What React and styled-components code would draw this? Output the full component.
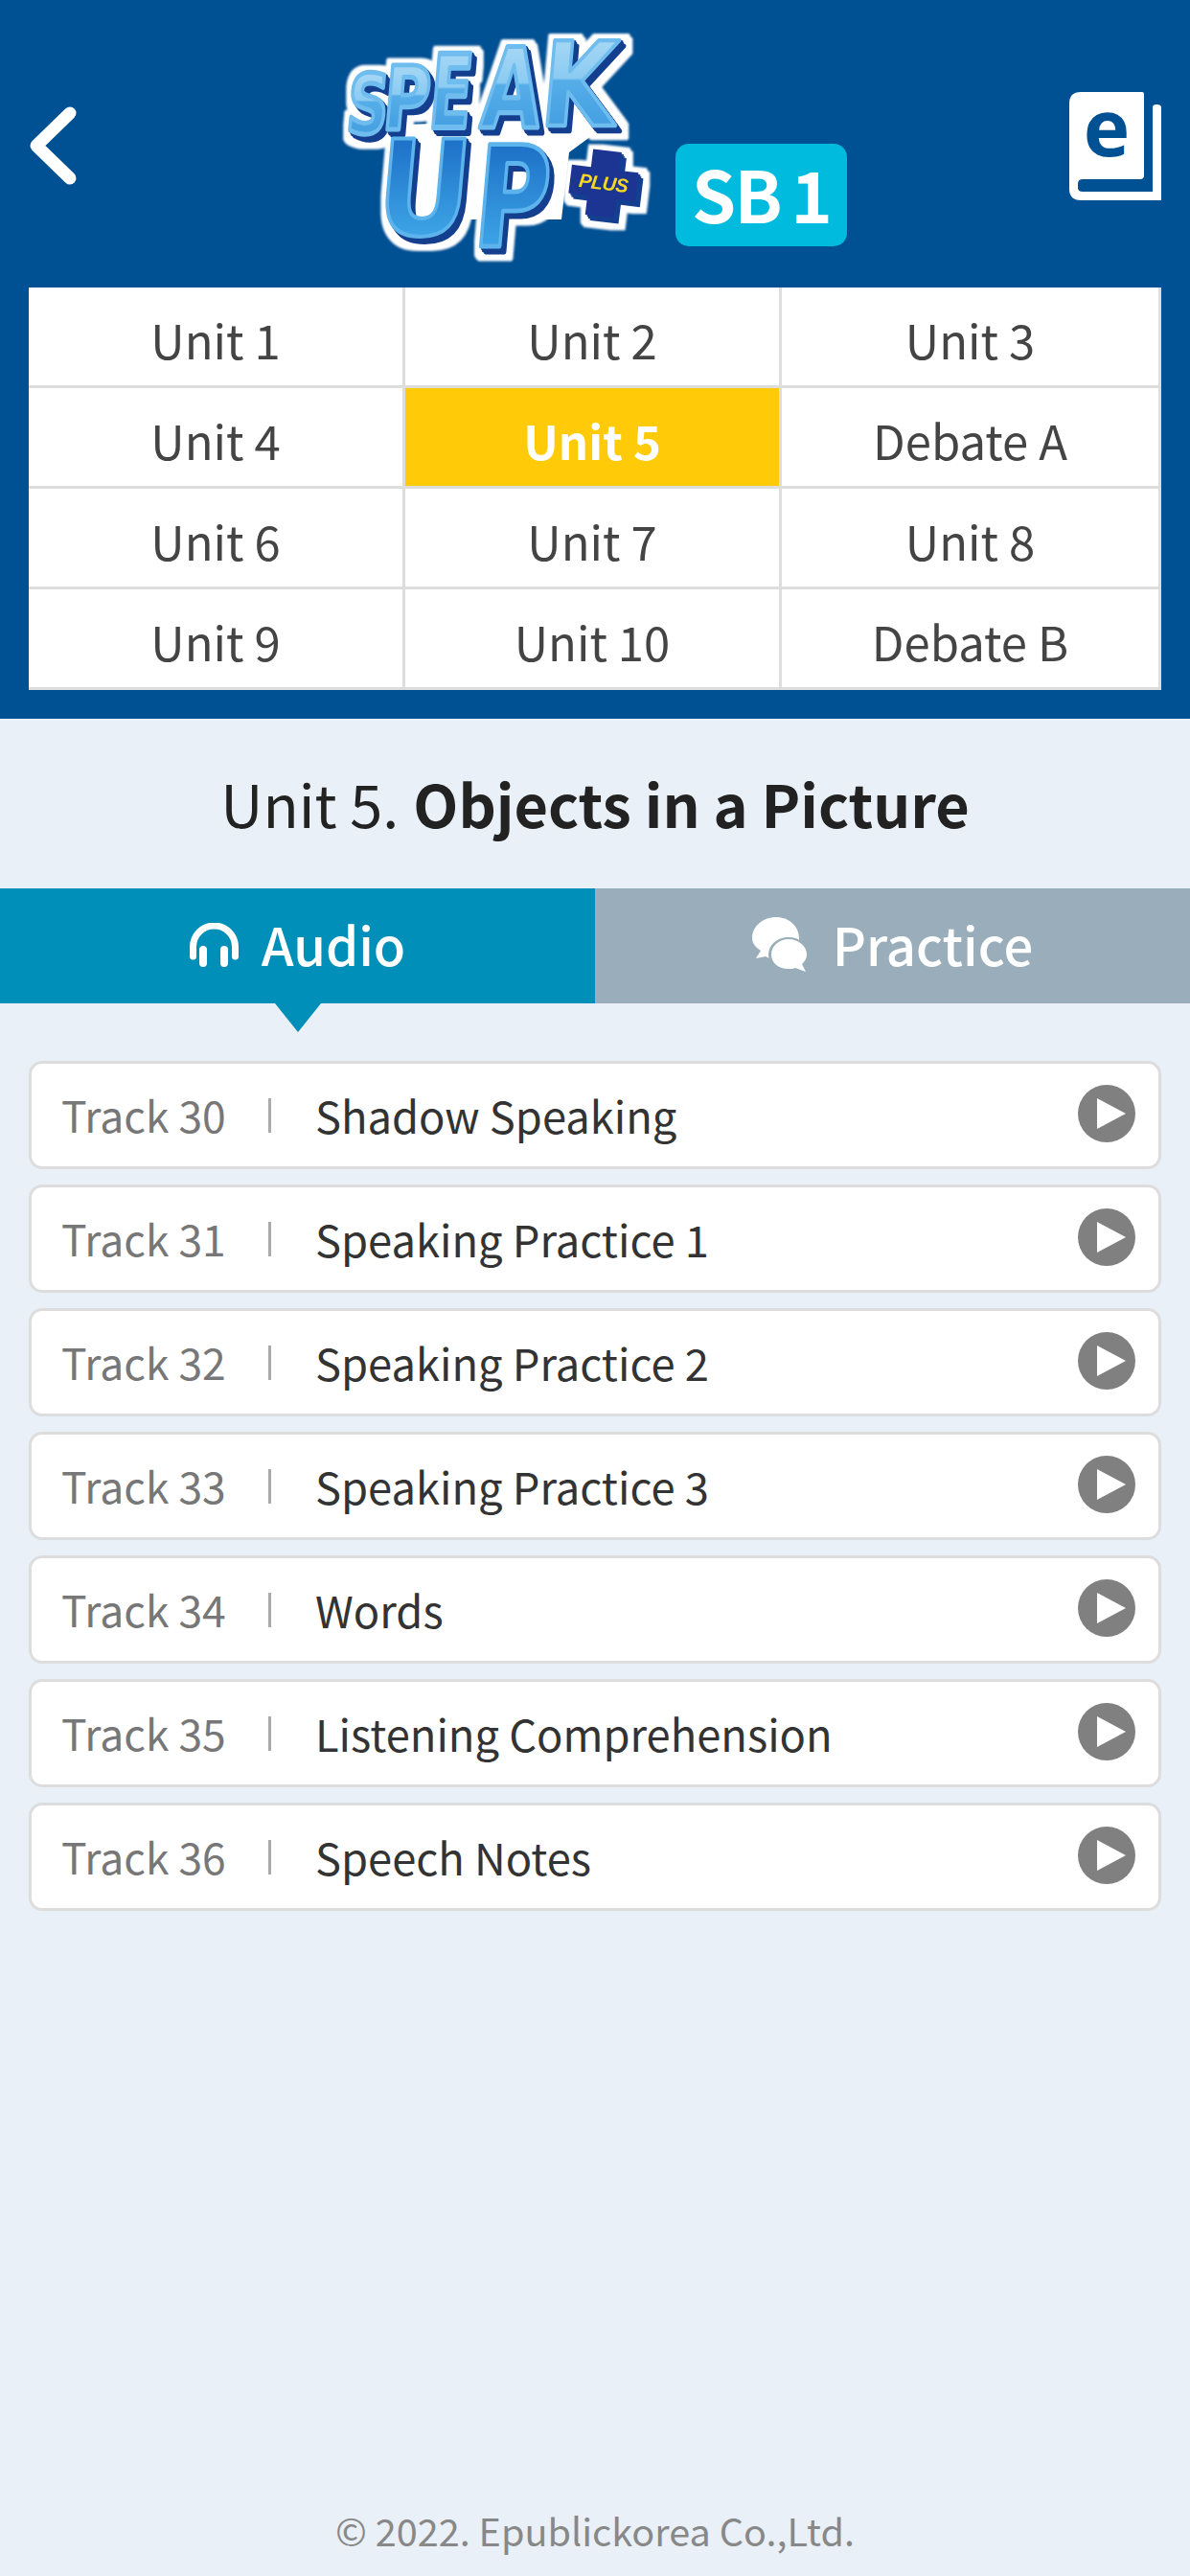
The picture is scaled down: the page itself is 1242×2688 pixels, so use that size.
import React from "react";
import styled, { createGlobalStyle } from "styled-components";

const GlobalStyle = createGlobalStyle`
  html, body {
    margin: 0;
    padding: 0;
    background: #e9f0f7;
  }
  * {
    box-sizing: border-box;
  }
  body {
    font-family: "Noto Sans CJK KR", "Noto Sans", sans-serif;
  }
`;

const Page = styled.div`
  width: 1242px;
  min-height: 2688px;
  display: flex;
  flex-direction: column;
  background: #e9f0f7;
`;

const Header = styled.header`
  height: 750px;
  background: #005094;
  padding: 0 30px;
`;

const TopBar = styled.div`
  height: 300px;
  display: grid;
  grid-template-columns: 96px 1fr 96px;
`;

const BackIcon = styled.svg`
  display: block;
  width: 50px;
  height: 82px;
  margin-top: 111px;
`;

const BookIcon = styled.svg`
  display: block;
  width: 96px;
  height: 113px;
  margin-top: 96px;
`;

const Brand = styled.div`
  display: flex;
  justify-content: center;
  align-items: flex-start;
  gap: 27px;
`;

const LogoArt = styled.svg`
  display: block;
  width: 320px;
  height: 240px;
  margin-top: 33px;
  overflow: visible;
`;

const Badge = styled.div`
  width: 179px;
  height: 107px;
  margin-top: 150px;
  padding-bottom: 5px;
  border-radius: 14px;
  background: #00bbdd;
  color: #fff;
  font-size: 74px;
  font-weight: 700;
  line-height: 102px;
  text-align: center;
  letter-spacing: -2px;
  word-spacing: -4px;
`;

const UnitGrid = styled.div`
  display: grid;
  grid-template-columns: 393px 393px 396px;
  background: #fff;
`;

const UnitCell = styled.div`
  height: 105px;
  padding-top: 4px;
  display: flex;
  align-items: center;
  justify-content: center;
  border-bottom: 3px solid #ddd;
  border-right: 3px solid #ddd;
  background: ${(p) => (p.$active ? "#ffca08" : "#fff")};
  color: ${(p) => (p.$active ? "#fff" : "#444")};
  font-size: 49px;
  font-weight: ${(p) => (p.$active ? 700 : 400)};
`;

const Title = styled.h1`
  height: 177px;
  margin: 0;
  padding-bottom: 3px;
  display: flex;
  align-items: center;
  justify-content: center;
  gap: 15px;
  color: #222;
  font-size: 61.2px;
  font-weight: 400;
  b {
    font-weight: 700;
  }
`;

const Tabs = styled.div`
  display: grid;
  grid-template-columns: 621px 621px;
  height: 120px;
`;

const Tab = styled.div`
  position: relative;
  display: flex;
  align-items: center;
  justify-content: center;
  gap: ${(p) => p.$gap}px;
  background: ${(p) => (p.$active ? "#008fb9" : "#99aeba")};
  color: #fff;
  font-size: 54.4px;
  font-weight: 500;
  ${(p) =>
    p.$active &&
    `
    &::after {
      content: "";
      position: absolute;
      left: 287px;
      top: 100%;
      border-left: 24px solid transparent;
      border-right: 24px solid transparent;
      border-top: 30px solid #008fb9;
    }
  `}
`;

const TabLabel = styled.span`
  margin-top: -5px;
`;

const TabIcon = styled.svg`
  display: block;
  flex: none;
  margin-top: -3px;
`;

const TrackList = styled.ul`
  list-style: none;
  margin: 0;
  padding: 60px 30px 0;
  display: flex;
  flex-direction: column;
  gap: 16px;
`;

const TrackRow = styled.li`
  height: 113px;
  display: flex;
  align-items: center;
  padding: 0 24px 0 31px;
  background: #fff;
  border: 3px solid #ddd;
  border-radius: 14px;
`;

const TrackNo = styled.span`
  width: 216px;
  margin-top: -2px;
  color: #777;
  font-size: 44.4px;
`;

const Divider = styled.i`
  display: block;
  width: 3px;
  height: 36px;
  background: #aaa;
  margin-top: 1px;
`;

const TrackName = styled.span`
  margin-left: 46px;
  margin-top: -2px;
  flex: 1;
  color: #333;
  font-size: 45.3px;
`;

const PlayIcon = styled.svg`
  display: block;
  width: 60px;
  height: 60px;
  margin-top: -4px;
`;

const Footer = styled.footer`
  margin-top: auto;
  padding-bottom: 20px;
  text-align: center;
  color: #888;
  font-size: 39.6px;
`;

const units = [
  "Unit 1", "Unit 2", "Unit 3",
  "Unit 4", "Unit 5", "Debate A",
  "Unit 6", "Unit 7", "Unit 8",
  "Unit 9", "Unit 10", "Debate B",
];

const tracks = [
  ["Track 30", "Shadow Speaking"],
  ["Track 31", "Speaking Practice 1"],
  ["Track 32", "Speaking Practice 2"],
  ["Track 33", "Speaking Practice 3"],
  ["Track 34", "Words"],
  ["Track 35", "Listening Comprehension"],
  ["Track 36", "Speech Notes"],
];

// x, baseline, scale x, scale y
const letters = [
  { c: "S", x: 2, y: 106, sx: 0.6, sy: 0.86, grad: "speak" },
  { c: "P", x: 40, y: 102, sx: 0.66, sy: 0.92, grad: "speak" },
  { c: "E", x: 88, y: 100, sx: 0.64, sy: 1.06, grad: "speak" },
  { c: "A", x: 142, y: 100, sx: 0.8, sy: 1.16, grad: "speak" },
  { c: "K", x: 204, y: 98, sx: 1.0, sy: 1.22, grad: "speak" },
  { c: "U", x: 32, y: 212, sx: 1.2, sy: 1.38, grad: "up" },
  { c: "P", x: 134, y: 224, sx: 1.06, sy: 1.46, grad: "up" },
];

const Logo = () => (
  <LogoArt viewBox="0 0 320 240">
    <defs>
      <linearGradient id="speak" x1="0" y1="0" x2="0" y2="1">
        <stop offset="0" stopColor="#b4def6" />
        <stop offset="0.45" stopColor="#8ccbf2" />
        <stop offset="0.47" stopColor="#55ade8" />
        <stop offset="1" stopColor="#3b97dd" />
      </linearGradient>
      <linearGradient id="up" x1="0" y1="0" x2="0" y2="1">
        <stop offset="0.15" stopColor="#1c6fc6" />
        <stop offset="0.85" stopColor="#40a8e8" />
      </linearGradient>
      <filter id="sticker" x="-8%" y="-8%" width="116%" height="116%" colorInterpolationFilters="sRGB">
        <feOffset in="SourceAlpha" dx="1.5" dy="2" result="o1" />
        <feOffset in="SourceAlpha" dx="3" dy="4" result="o2" />
        <feOffset in="SourceAlpha" dx="5" dy="6" result="o3" />
        <feMerge result="depth">
          <feMergeNode in="o1" />
          <feMergeNode in="o2" />
          <feMergeNode in="o3" />
        </feMerge>
        <feFlood floodColor="#143f8f" />
        <feComposite in2="depth" operator="in" result="darkDepth" />
        <feMorphology in="depth" operator="dilate" radius="7" result="fat" />
        <feGaussianBlur in="fat" stdDeviation="0.8" result="soft" />
        <feFlood floodColor="#ffffff" />
        <feComposite in2="soft" operator="in" result="white" />
        <feMerge>
          <feMergeNode in="white" />
          <feMergeNode in="darkDepth" />
          <feMergeNode in="SourceGraphic" />
        </feMerge>
      </filter>
    </defs>
    <polygon points="30,98 285,90 236,126 228,196 60,196 46,116" fill="#fff" />
    <g filter="url(#sticker)" fontFamily="DejaVu Sans" fontWeight="700" fontSize="100" strokeLinejoin="round">
      {letters.map((l, i) => (
        <text
          key={i}
          transform={`translate(${l.x} ${l.y}) skewX(-5) scale(${l.sx} ${l.sy})`}
          fill={`url(#${l.grad})`}
          stroke={l.grad === "up" ? "#5db3ec" : "#6fbcee"}
          strokeWidth={3.5 / l.sx}
        >
          {l.c}
        </text>
      ))}
      <g transform="translate(-5 0) rotate(7 277 157)">
        <path d="M262 124h30v19h20v30h-20v20h-30v-20h-20v-30h20z" fill="#1d3592" />
        <text x="277" y="165" textAnchor="middle" fontSize="20" fill="#f7d820" fontFamily="Liberation Sans" fontStyle="italic" letterSpacing="-0.5">PLUS</text>
      </g>
    </g>
  </LogoArt>
);

const App = () => (
  <Page>
    <GlobalStyle />
    <Header>
      <TopBar>
        <BackIcon viewBox="0 0 50 82">
          <path d="M43 7 L8 41 L43 75" fill="none" stroke="#fff" strokeWidth="13" strokeLinecap="round" strokeLinejoin="round" />
        </BackIcon>
        <Brand>
          <Logo />
          <Badge>SB 1</Badge>
        </Brand>
        <BookIcon viewBox="0 0 96 113">
          <path
            d="M12 0H76Q78 0 78 2V87Q78 91 74 91H14Q9 91 9 96V100Q9 104 14 104H87V16Q87 13 91 13Q96 13 96 16V113H12Q0 113 0 101V12Q0 0 12 0Z"
            fill="#fff"
          />
          <text x="39" y="67" textAnchor="middle" fontFamily="Open Sans" fontWeight="700" fontSize="82" fill="#005094">e</text>
        </BookIcon>
      </TopBar>
      <UnitGrid>
        {units.map((u) => (
          <UnitCell key={u} $active={u === "Unit 5"}>{u}</UnitCell>
        ))}
      </UnitGrid>
    </Header>
    <Title>
      <span>Unit 5.</span>
      <b>Objects in a Picture</b>
    </Title>
    <Tabs>
      <Tab $active $gap={24}>
        <TabIcon width="51" height="46" viewBox="0 0 51 46">
          <path d="M3.5 35V25a22 22 0 0 1 44 0V35" fill="none" stroke="#fff" strokeWidth="7" strokeLinecap="round" />
          <path d="M14 28V42M36 28V42" fill="none" stroke="#fff" strokeWidth="8" strokeLinecap="round" />
        </TabIcon>
        <TabLabel>Audio</TabLabel>
      </Tab>
      <Tab $gap={27}>
        <TabIcon width="57" height="57" viewBox="0 0 57 57">
          <path d="M25 0C38 0 49 9 49 22C49 35 38 44 25 44C21 44 17 43 14 41L4 43L9 35C3 31 0 27 0 22C0 9 12 0 25 0Z" fill="#fff" />
          <ellipse cx="38" cy="39" rx="21" ry="18" fill="#99aeba" />
          <path d="M38 23C48 23 57 30 57 39C57 44 54 47 52 49L56 57L45 53C43 54 41 54 38 54C28 54 20 48 20 39C20 30 28 23 38 23Z" fill="#fff" />
        </TabIcon>
        <TabLabel>Practice</TabLabel>
      </Tab>
    </Tabs>
    <TrackList>
      {tracks.map(([no, name]) => (
        <TrackRow key={no}>
          <TrackNo>{no}</TrackNo>
          <Divider />
          <TrackName>{name}</TrackName>
          <PlayIcon viewBox="0 0 60 60">
            <circle cx="30" cy="30" r="30" fill="#808080" />
            <path d="M20 14L50 30L20 46Z" fill="#fff" />
          </PlayIcon>
        </TrackRow>
      ))}
    </TrackList>
    <Footer>© 2022. Epublickorea Co.,Ltd.</Footer>
  </Page>
);

export default App;
